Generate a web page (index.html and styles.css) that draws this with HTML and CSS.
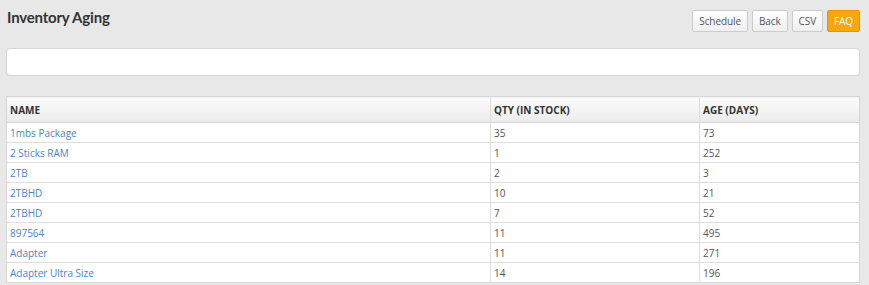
FILE: index.html
```html
<!DOCTYPE html>
<html lang="en">
<head>
  <meta charset="UTF-8">
  <title>Inventory Aging</title>
  <link rel="stylesheet" href="styles.css">
</head>
<body>
  <div class="page">
    <div class="top-bar">
      <h1 class="title">Inventory Aging</h1>
      <div class="actions">
        <button class="btn">Schedule</button>
        <button class="btn">Back</button>
        <button class="btn">CSV</button>
        <button class="btn btn-orange">FAQ</button>
      </div>
    </div>

    <div class="filter-box"></div>

    <table class="report">
      <thead>
        <tr>
          <th class="col-name">NAME</th>
          <th class="col-qty">QTY (IN STOCK)</th>
          <th>AGE (DAYS)</th>
        </tr>
      </thead>
      <tbody>
        <tr><td><a href="#">1mbs Package</a></td><td>35</td><td>73</td></tr>
        <tr><td><a href="#">2 Sticks RAM</a></td><td>1</td><td>252</td></tr>
        <tr><td><a href="#">2TB</a></td><td>2</td><td>3</td></tr>
        <tr><td><a href="#">2TBHD</a></td><td>10</td><td>21</td></tr>
        <tr><td><a href="#">2TBHD</a></td><td>7</td><td>52</td></tr>
        <tr><td><a href="#">897564</a></td><td>11</td><td>495</td></tr>
        <tr><td><a href="#">Adapter</a></td><td>11</td><td>271</td></tr>
        <tr><td><a href="#">Adapter Ultra Size</a></td><td>14</td><td>196</td></tr>
      </tbody>
    </table>
  </div>
</body>
</html>
```

FILE: styles.css
```css
body {
  margin: 0;
  background: #e8e8e8;
  font-family: 'Open Sans', sans-serif;
  color: #555;
  overflow: hidden;
}

.page {
  padding: 0 9px 0 6px;
}

.top-bar {
  display: flex;
  justify-content: space-between;
  align-items: flex-start;
  height: 48px;
}

.title {
  margin: 8px 0 0 1px;
  font-family: 'Lato', sans-serif;
  font-size: 15px;
  font-weight: 700;
  color: #333;
  letter-spacing: -0.2px;
}

.actions {
  display: flex;
  gap: 4px;
  margin-top: 10px;
}

.btn {
  height: 22px;
  padding: 0 6px;
  border: 1px solid #ccc;
  border-radius: 2px;
  background: linear-gradient(to bottom, #fff, #efefef);
  font-family: 'Open Sans', sans-serif;
  font-size: 10px;
  color: #555;
  letter-spacing: -0.1px;
}

.btn-orange {
  background: #f5a70c;
  border-color: #e0950a;
  color: #fff;
}

.filter-box {
  height: 26px;
  background: #fff;
  border: 1px solid #d4d4d4;
  border-radius: 4px;
}

.report {
  margin-top: 20px;
  width: 100%;
  border-collapse: collapse;
  background: #fff;
  font-size: 10px;
  border: 1px solid #d6d6d6;
}

.report th {
  height: 25px;
  padding: 0 0 0 3px;
  text-align: left;
  font-size: 10px;
  font-weight: 700;
  color: #333;
  background: linear-gradient(to bottom, #fcfcfc, #ebebeb);
  border-bottom: 1px solid #d6d6d6;
}

.report td {
  height: 19px;
  padding: 0 0 0 3px;
  border-top: 1px solid #ddd;
  color: #555;
}

.report td + td,
.report th + th {
  border-left: 1px solid #ddd;
}

.col-name {
  width: 480px;
}

.col-qty {
  width: 205px;
}

.report a {
  color: #4a86c5;
  text-decoration: none;
}
```
